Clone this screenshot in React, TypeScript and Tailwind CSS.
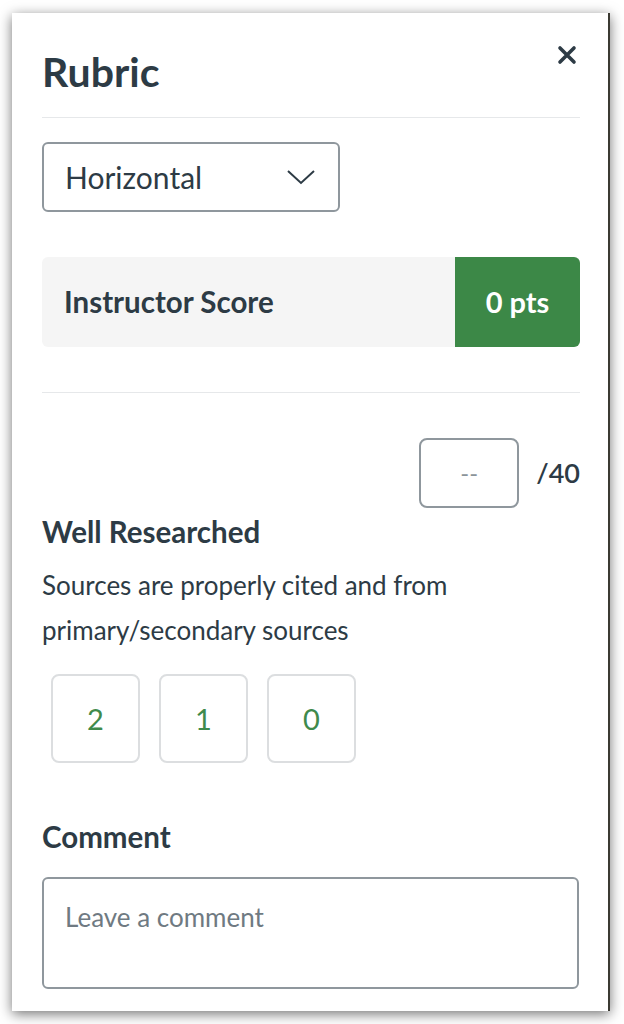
import React from 'react';

const font = { fontFamily: 'Lato, "Open Sans", sans-serif' };

const ScoreButton = ({ value }: { value: string }) => (
  <button className="flex h-[89px] w-[89px] items-center justify-center rounded-lg border-2 border-[#dcdee0] bg-white text-[29px] text-[#3f8a4c]">
    {value}
  </button>
);

const App = () => {
  return (
    <div className="h-[1024px] w-[624px] bg-white pl-[12px] pt-[13px]" style={font}>
      <div className="flex h-[998px] w-[598px] flex-col border-r-2 border-[#3b3a32] bg-white px-[30px] pt-[35px] shadow-[0_3px_12px_rgba(0,0,0,0.55)]">
        {/* header */}
        <div className="flex items-start justify-between">
          <h1 className="text-[41px] font-bold leading-[48px] text-[#2d3b45]">Rubric</h1>
          <svg width="20" height="20" viewBox="0 0 20 20" className="mr-[1px] mt-[-3px]">
            <path d="M3 3 L17 17 M17 3 L3 17" stroke="#2d3b45" strokeWidth="3.6" strokeLinecap="round" />
          </svg>
        </div>
        <div className="mt-[21px] h-px w-[538px] bg-[#e6e8ea]" />

        {/* view select */}
        <div className="mt-[24px] flex h-[70px] w-[298px] items-center justify-between rounded-md border-2 border-[#8f979d] pl-[21px] pr-[22px]">
          <span className="text-[30px] text-[#2d3b45]">Horizontal</span>
          <svg width="30" height="17" viewBox="0 0 30 17">
            <path d="M2 2 L15 14 L28 2" fill="none" stroke="#2d3b45" strokeWidth="2" />
          </svg>
        </div>

        {/* instructor score */}
        <div className="mt-[45px] flex h-[90px] w-[538px] overflow-hidden rounded-md bg-[#f5f5f5]">
          <div className="flex flex-1 items-center pl-[22px] text-[29.5px] font-bold text-[#2d3b45]">
            Instructor Score
          </div>
          <div className="flex w-[125px] items-center justify-center bg-[#3c8847] text-[29px] font-bold text-white">
            0 pts
          </div>
        </div>
        <div className="mt-[45px] h-px w-[538px] bg-[#e6e8ea]" />

        {/* criterion */}
        <div className="mt-[45px] flex w-[538px] items-center justify-end">
          <div className="flex h-[70px] w-[100px] items-center justify-center rounded-lg border-2 border-[#8f979d] text-[24px] text-[#8b949a]">
            --
          </div>
          <span className="ml-[17px] text-[27px] font-semibold text-[#2d3b45]">/40</span>
        </div>
        <h2 className="mt-[7px] text-[29.5px] font-bold leading-[34px] text-[#2d3b45]">Well Researched</h2>
        <p className="mt-[14px] w-[520px] text-[26px] leading-[45px] text-[#2d3b45]">
          Sources are properly cited and from primary/secondary sources
        </p>
        <div className="ml-[9px] mt-[21px] flex gap-[19px]">
          <ScoreButton value="2" />
          <ScoreButton value="1" />
          <ScoreButton value="0" />
        </div>

        {/* comment */}
        <h2 className="mt-[57px] text-[29.5px] font-bold leading-[34px] text-[#2d3b45]">Comment</h2>
        <textarea
          placeholder="Leave a comment"
          className="mt-[23px] h-[112px] w-[537px] resize-none rounded-md border-2 border-[#8f979d] px-[21px] pt-[21px] text-[26px] leading-[34px] text-[#2d3b45] outline-none placeholder:text-[#6f7a82]"
          style={font}
        />
      </div>
    </div>
  );
};

export default App;
